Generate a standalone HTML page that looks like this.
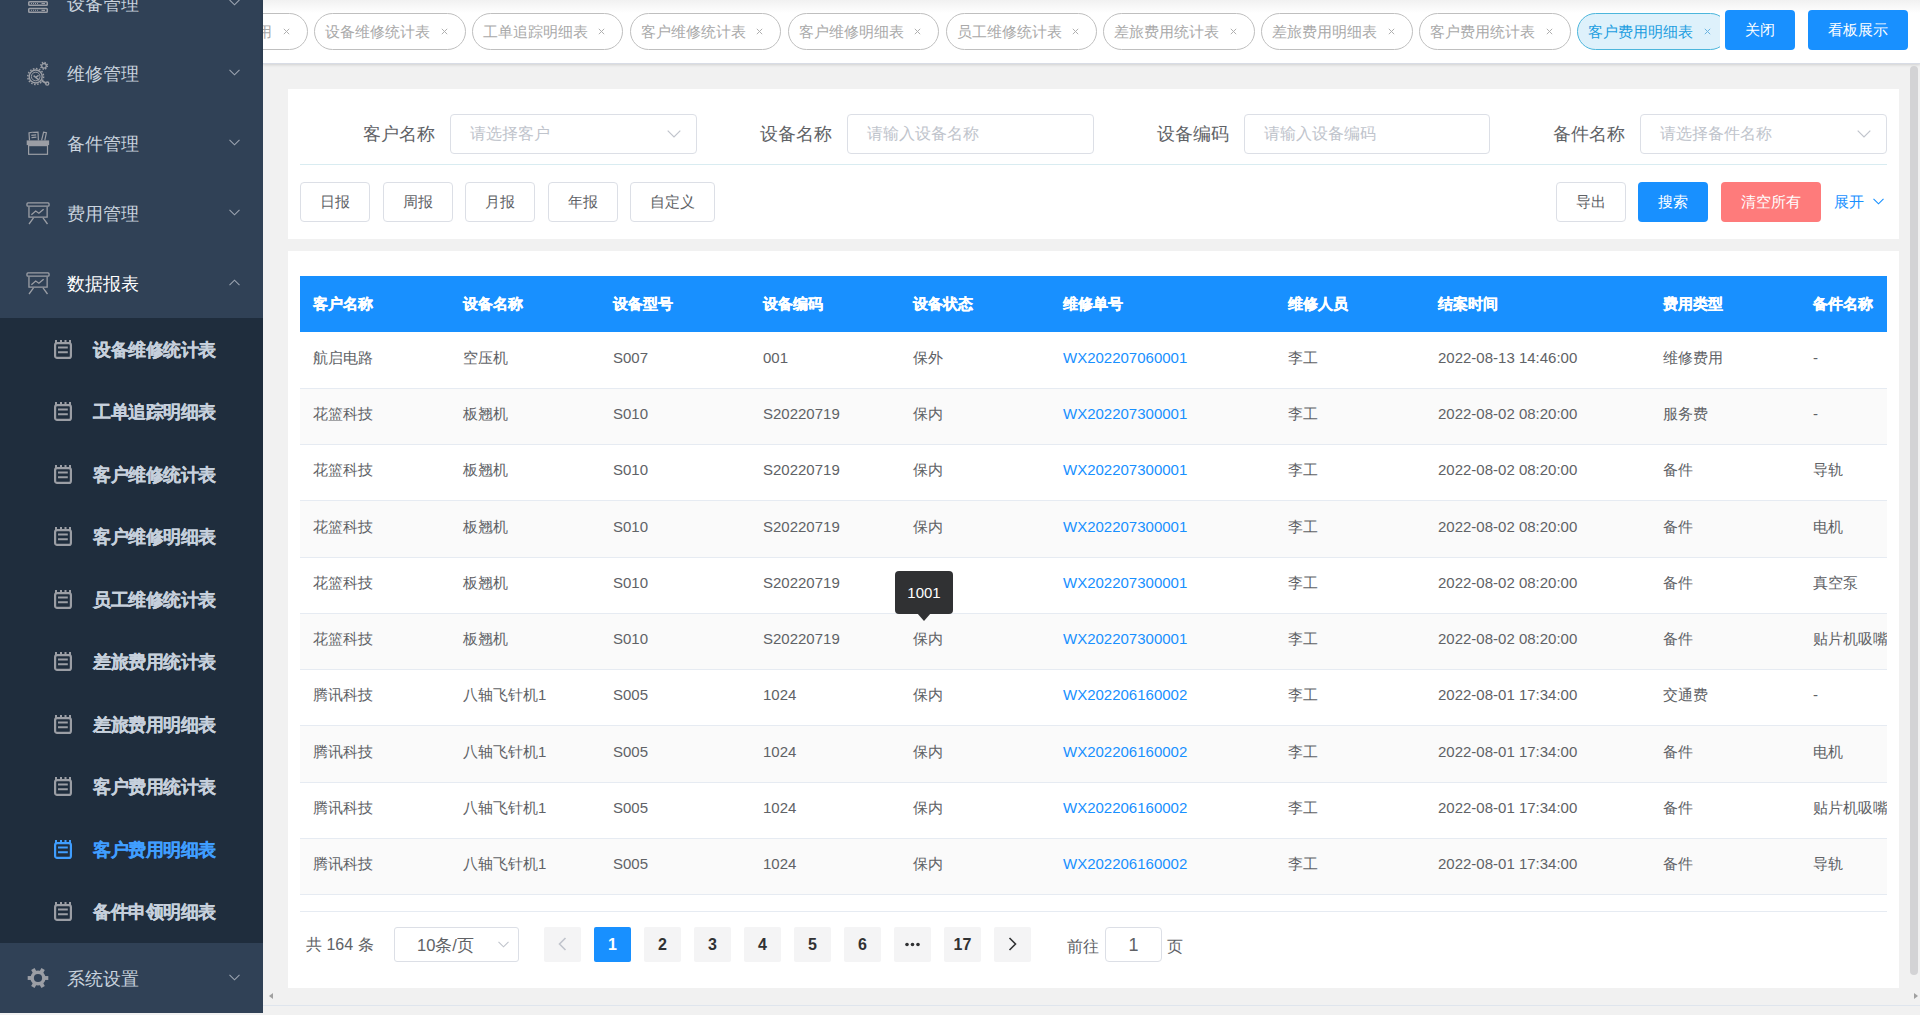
<!DOCTYPE html>
<html><head><meta charset="utf-8">
<style>

*{box-sizing:border-box;margin:0;padding:0}
html,body{width:1920px;height:1015px;overflow:hidden;background:#f1f1f1;font-family:"Liberation Sans",sans-serif;color:#606266}
.abs{position:absolute}
svg{display:block}
#side{position:absolute;left:0;top:0;width:263px;height:1013px;background:#304156;overflow:hidden}
.mi{position:absolute;left:0;width:263px;height:70px;color:#c9d3de;font-size:18px}
.mi .ic{position:absolute;left:26px;top:23px}
.mi .ic-dev{top:24px}
.mi .ic-repair{top:22px}
.mi .ic-parts{top:22px}
.mi .ic-gear{left:26px;top:23px}
.mi .tx{position:absolute;left:67.3px;top:0.5px;line-height:70px;white-space:nowrap}
.mi .ar{position:absolute;left:229px;top:31px;width:11px;height:7px}
.mi.open{color:#fff}
#sub{position:absolute;left:0;top:318px;width:263px;height:625px;background:#1f2d3d}
.si{position:absolute;left:0;width:263px;height:62.5px;color:#c6d0dc;font-size:17.5px;font-weight:bold;letter-spacing:-0.5px;-webkit-text-stroke:0.2px currentColor}
.si .ic{position:absolute;left:53px;top:20.5px;width:20px;height:20px}
.si .tx{position:absolute;left:93px;top:0.5px;line-height:62.5px;white-space:nowrap}
.si.act{color:#409eff}
#tabs{position:absolute;left:263px;top:0;width:1657px;height:64px;background:#fff;border-bottom:1px solid #d8dce5;box-shadow:0 1px 3px 0 rgba(0,0,0,.12),0 0 3px 0 rgba(0,0,0,.04)}
#tabs .topg{position:absolute;left:0;top:0;width:100%;height:13px;background:linear-gradient(#f1f1f1,#fff)}
#tabclip{position:absolute;left:0;top:0;width:1457px;height:63px;overflow:hidden}
.tab{position:absolute;top:13px;height:37px;width:151.5px;border:1px solid #bfbfbf;border-radius:18.5px;font-size:15px;color:#a9a9a9;white-space:nowrap}
.tab .t{position:absolute;left:10px;top:0;line-height:35px}
.tab .x{position:absolute;left:125.5px;top:13.5px;color:#b0b0b0}
.tab.on .x{color:#6cb4e0}
.tab.on{background:#def1fb;border-color:#4cb6dc;color:#1b9de0}
.btn{position:absolute;height:40px;border-radius:4px;font-size:15px;line-height:40px;text-align:center;white-space:nowrap}
.bp{background:#1890ff;color:#fff}
.bd{background:#fff;border:1px solid #dcdfe6;color:#606266;line-height:38px}
.card{position:absolute;left:288px;width:1611px;background:#fff}
.lbl{position:absolute;font-size:17.8px;color:#606266;line-height:40px;top:114px;white-space:nowrap;text-align:right;width:150px}
.inp{position:absolute;top:114px;height:40px;border:1px solid #dcdfe6;border-radius:4px;background:#fff;font-size:16px;color:#c0c4cc;line-height:38px;padding-left:19px;white-space:nowrap}
.inp svg{position:absolute;right:15px;top:15px}
#thead{position:absolute;left:300px;top:276px;width:1587px;height:56px;background:#1890ff;color:#fff;font-size:15px;font-weight:bold;overflow:hidden;-webkit-text-stroke:0.3px #fff}
.row{position:absolute;left:300px;width:1587px;height:56.25px;border-bottom:1px solid #e6ebf2;font-size:15px;color:#606266;overflow:hidden;background:#fff}
.row.st{background:#fafafa}
.c{position:absolute;top:0;white-space:nowrap}
#thead .c{line-height:56px}
.row .c{line-height:24px}
.lnk{color:#1890ff}
.pg{position:absolute;top:927px;height:35px;width:37px;border-radius:2px;background:#f4f4f5;color:#303133;font-size:16px;font-weight:bold;text-align:center;line-height:35px}
.pg.on{background:#1890ff;color:#fff}

</style></head><body>
<div id="side">
<div class="mi" style="top:-32px"><span class="ic ic-dev"><svg width="24" height="24" viewBox="0 0 24 24"><g fill="none" stroke="#9b9ea5" stroke-width="1.5"><rect x="2.75" y="2.5" width="18.5" height="3.8" rx="0.8"/><rect x="2.75" y="9.75" width="18.5" height="3.6" rx="0.8"/><rect x="2.75" y="16.45" width="18.5" height="3.8" rx="0.8"/></g><g stroke="#9b9ea5" stroke-width="1" stroke-dasharray="1 1"><path d="M5 11.5 H12 M5 18.3 H12"/></g><g stroke="#9b9ea5" stroke-width="1.2"><path d="M15.5 11.5 H19 M15.5 18.3 H19"/></g></svg></span><span class="tx">设备管理</span><span class="ar"><svg width="11" height="7" viewBox="0 0 11 7"><path d="M0.5 0.8 L5.5 5.8 L10.5 0.8" fill="none" stroke="#9aa3b0" stroke-width="1.1"/></svg></span></div>
<div class="mi" style="top:38px"><span class="ic ic-repair"><svg width="26" height="26" viewBox="0 0 26 26"><g fill="none" stroke="#9b9ea5"><circle cx="9.7" cy="16.5" r="7.9" stroke-width="1.5" stroke-dasharray="1.6 1.5"/><circle cx="9.7" cy="16.5" r="6.5" stroke-width="1.4"/><circle cx="9.7" cy="16.5" r="4.3" stroke-width="1"/><path d="M7.6 15.6 L9.6 17.4 L12.6 15.4 M9.6 17.4 L13.2 20.2" stroke-width="1.5"/><circle cx="18" cy="5.8" r="3.3" stroke-width="1.6" stroke-dasharray="1.3 1.3"/><circle cx="18" cy="5.8" r="2.3" stroke-width="1.3"/><path d="M15.5 20.5 L20.5 23.5" stroke-width="2"/><circle cx="21.2" cy="23.6" r="1.6" stroke-width="1.3"/></g></svg></span><span class="tx">维修管理</span><span class="ar"><svg width="11" height="7" viewBox="0 0 11 7"><path d="M0.5 0.8 L5.5 5.8 L10.5 0.8" fill="none" stroke="#9aa3b0" stroke-width="1.1"/></svg></span></div>
<div class="mi" style="top:108px"><span class="ic ic-parts"><svg width="26" height="26" viewBox="0 0 26 26"><g fill="none" stroke="#9b9ea5" stroke-width="1.2"><rect x="2.6" y="15.6" width="18.9" height="8.7"/><path d="M3.5 10.4 L3 2.9 Q5.5 1.9 8 2.4 L12 2.1 L12.4 10.4"/><path d="M5.3 5.3 L10.2 4.9 M5.5 7.6 L10.4 7.2"/><path d="M15.6 10.4 L17.6 2.2 L20.4 2.7 L18.8 10.4"/></g><rect x="0.7" y="10.4" width="22.4" height="4.7" fill="#9b9ea5"/></svg></span><span class="tx">备件管理</span><span class="ar"><svg width="11" height="7" viewBox="0 0 11 7"><path d="M0.5 0.8 L5.5 5.8 L10.5 0.8" fill="none" stroke="#9aa3b0" stroke-width="1.1"/></svg></span></div>
<div class="mi" style="top:178px"><span class="ic ic-fee"><svg width="24" height="24" viewBox="0 0 24 24"><g fill="none" stroke="#9b9ea5" stroke-width="1.3"><rect x="0.95" y="1.95" width="22.1" height="3.2" rx="1"/><path d="M2.95 5.8 V16.15 H21.15 V5.8"/><path d="M5.4 13.7 L9.7 10 L12.9 12.2 L17.6 8.2"/><path d="M7.5 16.8 L3 23 M17 16.8 L21.5 23"/></g></svg></span><span class="tx">费用管理</span><span class="ar"><svg width="11" height="7" viewBox="0 0 11 7"><path d="M0.5 0.8 L5.5 5.8 L10.5 0.8" fill="none" stroke="#9aa3b0" stroke-width="1.1"/></svg></span></div>
<div class="mi open" style="top:248px"><span class="ic ic-fee"><svg width="24" height="24" viewBox="0 0 24 24"><g fill="none" stroke="#9b9ea5" stroke-width="1.3"><rect x="0.95" y="1.95" width="22.1" height="3.2" rx="1"/><path d="M2.95 5.8 V16.15 H21.15 V5.8"/><path d="M5.4 13.7 L9.7 10 L12.9 12.2 L17.6 8.2"/><path d="M7.5 16.8 L3 23 M17 16.8 L21.5 23"/></g></svg></span><span class="tx">数据报表</span><span class="ar"><svg width="11" height="7" viewBox="0 0 11 7"><path d="M0.5 6.2 L5.5 1.2 L10.5 6.2" fill="none" stroke="#9aa3b0" stroke-width="1.1"/></svg></span></div>
<div id="sub">
<div class="si" style="top:0.0px"><span class="ic"><svg width="20" height="20" viewBox="0 0 20 20"><g fill="none" stroke="#9b9ea5" stroke-width="2.2"><rect x="2.1" y="4.1" width="15.8" height="14.8" rx="2"/><path d="M5 8.6 H14.8 M5 13.3 H14.8" stroke-width="2"/></g><g fill="#9b9ea5"><rect x="2" y="1" width="2" height="3"/><rect x="7" y="1" width="2" height="3"/><rect x="11.5" y="1" width="2" height="3"/><rect x="16" y="1" width="2" height="3"/></g></svg></span><span class="tx">设备维修统计表</span></div>
<div class="si" style="top:62.5px"><span class="ic"><svg width="20" height="20" viewBox="0 0 20 20"><g fill="none" stroke="#9b9ea5" stroke-width="2.2"><rect x="2.1" y="4.1" width="15.8" height="14.8" rx="2"/><path d="M5 8.6 H14.8 M5 13.3 H14.8" stroke-width="2"/></g><g fill="#9b9ea5"><rect x="2" y="1" width="2" height="3"/><rect x="7" y="1" width="2" height="3"/><rect x="11.5" y="1" width="2" height="3"/><rect x="16" y="1" width="2" height="3"/></g></svg></span><span class="tx">工单追踪明细表</span></div>
<div class="si" style="top:125.0px"><span class="ic"><svg width="20" height="20" viewBox="0 0 20 20"><g fill="none" stroke="#9b9ea5" stroke-width="2.2"><rect x="2.1" y="4.1" width="15.8" height="14.8" rx="2"/><path d="M5 8.6 H14.8 M5 13.3 H14.8" stroke-width="2"/></g><g fill="#9b9ea5"><rect x="2" y="1" width="2" height="3"/><rect x="7" y="1" width="2" height="3"/><rect x="11.5" y="1" width="2" height="3"/><rect x="16" y="1" width="2" height="3"/></g></svg></span><span class="tx">客户维修统计表</span></div>
<div class="si" style="top:187.5px"><span class="ic"><svg width="20" height="20" viewBox="0 0 20 20"><g fill="none" stroke="#9b9ea5" stroke-width="2.2"><rect x="2.1" y="4.1" width="15.8" height="14.8" rx="2"/><path d="M5 8.6 H14.8 M5 13.3 H14.8" stroke-width="2"/></g><g fill="#9b9ea5"><rect x="2" y="1" width="2" height="3"/><rect x="7" y="1" width="2" height="3"/><rect x="11.5" y="1" width="2" height="3"/><rect x="16" y="1" width="2" height="3"/></g></svg></span><span class="tx">客户维修明细表</span></div>
<div class="si" style="top:250.0px"><span class="ic"><svg width="20" height="20" viewBox="0 0 20 20"><g fill="none" stroke="#9b9ea5" stroke-width="2.2"><rect x="2.1" y="4.1" width="15.8" height="14.8" rx="2"/><path d="M5 8.6 H14.8 M5 13.3 H14.8" stroke-width="2"/></g><g fill="#9b9ea5"><rect x="2" y="1" width="2" height="3"/><rect x="7" y="1" width="2" height="3"/><rect x="11.5" y="1" width="2" height="3"/><rect x="16" y="1" width="2" height="3"/></g></svg></span><span class="tx">员工维修统计表</span></div>
<div class="si" style="top:312.5px"><span class="ic"><svg width="20" height="20" viewBox="0 0 20 20"><g fill="none" stroke="#9b9ea5" stroke-width="2.2"><rect x="2.1" y="4.1" width="15.8" height="14.8" rx="2"/><path d="M5 8.6 H14.8 M5 13.3 H14.8" stroke-width="2"/></g><g fill="#9b9ea5"><rect x="2" y="1" width="2" height="3"/><rect x="7" y="1" width="2" height="3"/><rect x="11.5" y="1" width="2" height="3"/><rect x="16" y="1" width="2" height="3"/></g></svg></span><span class="tx">差旅费用统计表</span></div>
<div class="si" style="top:375.0px"><span class="ic"><svg width="20" height="20" viewBox="0 0 20 20"><g fill="none" stroke="#9b9ea5" stroke-width="2.2"><rect x="2.1" y="4.1" width="15.8" height="14.8" rx="2"/><path d="M5 8.6 H14.8 M5 13.3 H14.8" stroke-width="2"/></g><g fill="#9b9ea5"><rect x="2" y="1" width="2" height="3"/><rect x="7" y="1" width="2" height="3"/><rect x="11.5" y="1" width="2" height="3"/><rect x="16" y="1" width="2" height="3"/></g></svg></span><span class="tx">差旅费用明细表</span></div>
<div class="si" style="top:437.5px"><span class="ic"><svg width="20" height="20" viewBox="0 0 20 20"><g fill="none" stroke="#9b9ea5" stroke-width="2.2"><rect x="2.1" y="4.1" width="15.8" height="14.8" rx="2"/><path d="M5 8.6 H14.8 M5 13.3 H14.8" stroke-width="2"/></g><g fill="#9b9ea5"><rect x="2" y="1" width="2" height="3"/><rect x="7" y="1" width="2" height="3"/><rect x="11.5" y="1" width="2" height="3"/><rect x="16" y="1" width="2" height="3"/></g></svg></span><span class="tx">客户费用统计表</span></div>
<div class="si act" style="top:500.0px"><span class="ic"><svg width="20" height="20" viewBox="0 0 20 20"><g fill="none" stroke="#409eff" stroke-width="2.2"><rect x="2.1" y="4.1" width="15.8" height="14.8" rx="2"/><path d="M5 8.6 H14.8 M5 13.3 H14.8" stroke-width="2"/></g><g fill="#409eff"><rect x="2" y="1" width="2" height="3"/><rect x="7" y="1" width="2" height="3"/><rect x="11.5" y="1" width="2" height="3"/><rect x="16" y="1" width="2" height="3"/></g></svg></span><span class="tx">客户费用明细表</span></div>
<div class="si" style="top:562.5px"><span class="ic"><svg width="20" height="20" viewBox="0 0 20 20"><g fill="none" stroke="#9b9ea5" stroke-width="2.2"><rect x="2.1" y="4.1" width="15.8" height="14.8" rx="2"/><path d="M5 8.6 H14.8 M5 13.3 H14.8" stroke-width="2"/></g><g fill="#9b9ea5"><rect x="2" y="1" width="2" height="3"/><rect x="7" y="1" width="2" height="3"/><rect x="11.5" y="1" width="2" height="3"/><rect x="16" y="1" width="2" height="3"/></g></svg></span><span class="tx">备件申领明细表</span></div>
</div>
<div class="mi" style="top:943px"><span class="ic ic-gear"><svg width="24" height="24" viewBox="0 0 24 24"><line x1="12" y1="12" x2="22.30" y2="12.00" stroke="#9b9ea5" stroke-width="3.9"/><line x1="12" y1="12" x2="17.15" y2="20.92" stroke="#9b9ea5" stroke-width="3.9"/><line x1="12" y1="12" x2="6.85" y2="20.92" stroke="#9b9ea5" stroke-width="3.9"/><line x1="12" y1="12" x2="1.70" y2="12.00" stroke="#9b9ea5" stroke-width="3.9"/><line x1="12" y1="12" x2="6.85" y2="3.08" stroke="#9b9ea5" stroke-width="3.9"/><line x1="12" y1="12" x2="17.15" y2="3.08" stroke="#9b9ea5" stroke-width="3.9"/><circle cx="12" cy="12" r="7.6" fill="#9b9ea5"/><circle cx="12" cy="12" r="4.1" fill="#304156"/></svg></span><span class="tx">系统设置</span><span class="ar"><svg width="11" height="7" viewBox="0 0 11 7"><path d="M0.5 0.8 L5.5 5.8 L10.5 0.8" fill="none" stroke="#9aa3b0" stroke-width="1.1"/></svg></span></div>
</div>
<div id="tabs"><div class="topg"></div><div id="tabclip">
<div class="tab" style="left:-106.875px"><span class="t">设备维修总费用</span><span class="x"><svg width="7" height="7" viewBox="0 0 7 7"><path d="M0.8 0.8 L6.2 6.2 M6.2 0.8 L0.8 6.2" stroke="currentColor" stroke-width="1"/></svg></span></div>
<div class="tab" style="left:51.0px"><span class="t">设备维修统计表</span><span class="x"><svg width="7" height="7" viewBox="0 0 7 7"><path d="M0.8 0.8 L6.2 6.2 M6.2 0.8 L0.8 6.2" stroke="currentColor" stroke-width="1"/></svg></span></div>
<div class="tab" style="left:208.875px"><span class="t">工单追踪明细表</span><span class="x"><svg width="7" height="7" viewBox="0 0 7 7"><path d="M0.8 0.8 L6.2 6.2 M6.2 0.8 L0.8 6.2" stroke="currentColor" stroke-width="1"/></svg></span></div>
<div class="tab" style="left:366.75px"><span class="t">客户维修统计表</span><span class="x"><svg width="7" height="7" viewBox="0 0 7 7"><path d="M0.8 0.8 L6.2 6.2 M6.2 0.8 L0.8 6.2" stroke="currentColor" stroke-width="1"/></svg></span></div>
<div class="tab" style="left:524.625px"><span class="t">客户维修明细表</span><span class="x"><svg width="7" height="7" viewBox="0 0 7 7"><path d="M0.8 0.8 L6.2 6.2 M6.2 0.8 L0.8 6.2" stroke="currentColor" stroke-width="1"/></svg></span></div>
<div class="tab" style="left:682.5px"><span class="t">员工维修统计表</span><span class="x"><svg width="7" height="7" viewBox="0 0 7 7"><path d="M0.8 0.8 L6.2 6.2 M6.2 0.8 L0.8 6.2" stroke="currentColor" stroke-width="1"/></svg></span></div>
<div class="tab" style="left:840.375px"><span class="t">差旅费用统计表</span><span class="x"><svg width="7" height="7" viewBox="0 0 7 7"><path d="M0.8 0.8 L6.2 6.2 M6.2 0.8 L0.8 6.2" stroke="currentColor" stroke-width="1"/></svg></span></div>
<div class="tab" style="left:998.25px"><span class="t">差旅费用明细表</span><span class="x"><svg width="7" height="7" viewBox="0 0 7 7"><path d="M0.8 0.8 L6.2 6.2 M6.2 0.8 L0.8 6.2" stroke="currentColor" stroke-width="1"/></svg></span></div>
<div class="tab" style="left:1156.125px"><span class="t">客户费用统计表</span><span class="x"><svg width="7" height="7" viewBox="0 0 7 7"><path d="M0.8 0.8 L6.2 6.2 M6.2 0.8 L0.8 6.2" stroke="currentColor" stroke-width="1"/></svg></span></div>
<div class="tab on" style="left:1314.0px"><span class="t">客户费用明细表</span><span class="x"><svg width="7" height="7" viewBox="0 0 7 7"><path d="M0.8 0.8 L6.2 6.2 M6.2 0.8 L0.8 6.2" stroke="currentColor" stroke-width="1"/></svg></span></div>
</div>
<div class="btn bp" style="left:1462px;top:10px;width:70px">关闭</div>
<div class="btn bp" style="left:1545px;top:10px;width:100px">看板展示</div>
</div>
<div class="card" style="top:89px;height:150px"></div>
<div class="lbl" style="left:285.0px">客户名称</div>
<div class="inp" style="left:450.0px;width:246.75px">请选择客户<svg width="14" height="8" viewBox="0 0 14 8"><path d="M0.7 0.7 L7 7 L13.3 0.7" fill="none" stroke="#c0c4cc" stroke-width="1.2"/></svg></div>
<div class="lbl" style="left:681.75px">设备名称</div>
<div class="inp" style="left:846.75px;width:246.75px">请输入设备名称</div>
<div class="lbl" style="left:1078.5px">设备编码</div>
<div class="inp" style="left:1243.5px;width:246.75px">请输入设备编码</div>
<div class="lbl" style="left:1475.25px">备件名称</div>
<div class="inp" style="left:1640.25px;width:246.75px">请选择备件名称<svg width="14" height="8" viewBox="0 0 14 8"><path d="M0.7 0.7 L7 7 L13.3 0.7" fill="none" stroke="#c0c4cc" stroke-width="1.2"/></svg></div>
<div class="abs" style="left:300px;top:164px;width:1587px;height:1px;background:#d9ecf1"></div>
<div class="btn bd" style="left:300px;top:182px;width:70px">日报</div>
<div class="btn bd" style="left:383px;top:182px;width:70px">周报</div>
<div class="btn bd" style="left:465px;top:182px;width:70px">月报</div>
<div class="btn bd" style="left:548px;top:182px;width:70px">年报</div>
<div class="btn bd" style="left:630px;top:182px;width:85px">自定义</div>
<div class="btn bd" style="left:1556px;top:182px;width:70px">导出</div>
<div class="btn bp" style="left:1638px;top:182px;width:70px">搜索</div>
<div class="btn" style="left:1721px;top:182px;width:100px;background:#fe7b7b;color:#fff">清空所有</div>
<div class="abs" style="left:1834px;top:182px;line-height:40px;font-size:15px;color:#1890ff;white-space:nowrap">展开</div>
<div class="abs" style="left:1873px;top:198px"><svg width="11" height="7" viewBox="0 0 11 7"><path d="M0.5 0.8 L5.5 5.8 L10.5 0.8" fill="none" stroke="#1890ff" stroke-width="1.1"/></svg></div>
<div class="card" style="top:251px;height:737px"></div>
<div id="thead"><span class="c" style="left:13px">客户名称</span><span class="c" style="left:163px">设备名称</span><span class="c" style="left:313px">设备型号</span><span class="c" style="left:463px">设备编码</span><span class="c" style="left:613px">设备状态</span><span class="c" style="left:763px">维修单号</span><span class="c" style="left:988px">维修人员</span><span class="c" style="left:1138px">结案时间</span><span class="c" style="left:1363px">费用类型</span><span class="c" style="left:1513px">备件名称</span></div>
<div class="row" style="top:332px;height:57px"><span class="c" style="left:13px;top:14.30px">航启电路</span><span class="c" style="left:163px;top:14.30px">空压机</span><span class="c" style="left:313px;top:14.30px">S007</span><span class="c" style="left:463px;top:14.30px">001</span><span class="c" style="left:613px;top:14.30px">保外</span><span class="c lnk" style="left:763px;top:14.30px">WX202207060001</span><span class="c" style="left:988px;top:14.30px">李工</span><span class="c" style="left:1138px;top:14.30px">2022-08-13 14:46:00</span><span class="c" style="left:1363px;top:14.30px">维修费用</span><span class="c" style="left:1513px;top:14.30px">-</span></div>
<div class="row st" style="top:389px;height:56px"><span class="c" style="left:13px;top:13.30px">花篮科技</span><span class="c" style="left:163px;top:13.30px">板翘机</span><span class="c" style="left:313px;top:13.30px">S010</span><span class="c" style="left:463px;top:13.30px">S20220719</span><span class="c" style="left:613px;top:13.30px">保内</span><span class="c lnk" style="left:763px;top:13.30px">WX202207300001</span><span class="c" style="left:988px;top:13.30px">李工</span><span class="c" style="left:1138px;top:13.30px">2022-08-02 08:20:00</span><span class="c" style="left:1363px;top:13.30px">服务费</span><span class="c" style="left:1513px;top:13.30px">-</span></div>
<div class="row" style="top:445px;height:56px"><span class="c" style="left:13px;top:13.30px">花篮科技</span><span class="c" style="left:163px;top:13.30px">板翘机</span><span class="c" style="left:313px;top:13.30px">S010</span><span class="c" style="left:463px;top:13.30px">S20220719</span><span class="c" style="left:613px;top:13.30px">保内</span><span class="c lnk" style="left:763px;top:13.30px">WX202207300001</span><span class="c" style="left:988px;top:13.30px">李工</span><span class="c" style="left:1138px;top:13.30px">2022-08-02 08:20:00</span><span class="c" style="left:1363px;top:13.30px">备件</span><span class="c" style="left:1513px;top:13.30px">导轨</span></div>
<div class="row st" style="top:501px;height:57px"><span class="c" style="left:13px;top:14.30px">花篮科技</span><span class="c" style="left:163px;top:14.30px">板翘机</span><span class="c" style="left:313px;top:14.30px">S010</span><span class="c" style="left:463px;top:14.30px">S20220719</span><span class="c" style="left:613px;top:14.30px">保内</span><span class="c lnk" style="left:763px;top:14.30px">WX202207300001</span><span class="c" style="left:988px;top:14.30px">李工</span><span class="c" style="left:1138px;top:14.30px">2022-08-02 08:20:00</span><span class="c" style="left:1363px;top:14.30px">备件</span><span class="c" style="left:1513px;top:14.30px">电机</span></div>
<div class="row" style="top:558px;height:56px"><span class="c" style="left:13px;top:13.30px">花篮科技</span><span class="c" style="left:163px;top:13.30px">板翘机</span><span class="c" style="left:313px;top:13.30px">S010</span><span class="c" style="left:463px;top:13.30px">S20220719</span><span class="c" style="left:613px;top:13.30px">保内</span><span class="c lnk" style="left:763px;top:13.30px">WX202207300001</span><span class="c" style="left:988px;top:13.30px">李工</span><span class="c" style="left:1138px;top:13.30px">2022-08-02 08:20:00</span><span class="c" style="left:1363px;top:13.30px">备件</span><span class="c" style="left:1513px;top:13.30px">真空泵</span></div>
<div class="row st" style="top:614px;height:56px"><span class="c" style="left:13px;top:13.30px">花篮科技</span><span class="c" style="left:163px;top:13.30px">板翘机</span><span class="c" style="left:313px;top:13.30px">S010</span><span class="c" style="left:463px;top:13.30px">S20220719</span><span class="c" style="left:613px;top:13.30px">保内</span><span class="c lnk" style="left:763px;top:13.30px">WX202207300001</span><span class="c" style="left:988px;top:13.30px">李工</span><span class="c" style="left:1138px;top:13.30px">2022-08-02 08:20:00</span><span class="c" style="left:1363px;top:13.30px">备件</span><span class="c" style="left:1513px;top:13.30px">贴片机吸嘴</span></div>
<div class="row" style="top:670px;height:56px"><span class="c" style="left:13px;top:13.30px">腾讯科技</span><span class="c" style="left:163px;top:13.30px">八轴飞针机1</span><span class="c" style="left:313px;top:13.30px">S005</span><span class="c" style="left:463px;top:13.30px">1024</span><span class="c" style="left:613px;top:13.30px">保内</span><span class="c lnk" style="left:763px;top:13.30px">WX202206160002</span><span class="c" style="left:988px;top:13.30px">李工</span><span class="c" style="left:1138px;top:13.30px">2022-08-01 17:34:00</span><span class="c" style="left:1363px;top:13.30px">交通费</span><span class="c" style="left:1513px;top:13.30px">-</span></div>
<div class="row st" style="top:726px;height:57px"><span class="c" style="left:13px;top:14.30px">腾讯科技</span><span class="c" style="left:163px;top:14.30px">八轴飞针机1</span><span class="c" style="left:313px;top:14.30px">S005</span><span class="c" style="left:463px;top:14.30px">1024</span><span class="c" style="left:613px;top:14.30px">保内</span><span class="c lnk" style="left:763px;top:14.30px">WX202206160002</span><span class="c" style="left:988px;top:14.30px">李工</span><span class="c" style="left:1138px;top:14.30px">2022-08-01 17:34:00</span><span class="c" style="left:1363px;top:14.30px">备件</span><span class="c" style="left:1513px;top:14.30px">电机</span></div>
<div class="row" style="top:783px;height:56px"><span class="c" style="left:13px;top:13.30px">腾讯科技</span><span class="c" style="left:163px;top:13.30px">八轴飞针机1</span><span class="c" style="left:313px;top:13.30px">S005</span><span class="c" style="left:463px;top:13.30px">1024</span><span class="c" style="left:613px;top:13.30px">保内</span><span class="c lnk" style="left:763px;top:13.30px">WX202206160002</span><span class="c" style="left:988px;top:13.30px">李工</span><span class="c" style="left:1138px;top:13.30px">2022-08-01 17:34:00</span><span class="c" style="left:1363px;top:13.30px">备件</span><span class="c" style="left:1513px;top:13.30px">贴片机吸嘴</span></div>
<div class="row st" style="top:839px;height:56px"><span class="c" style="left:13px;top:13.30px">腾讯科技</span><span class="c" style="left:163px;top:13.30px">八轴飞针机1</span><span class="c" style="left:313px;top:13.30px">S005</span><span class="c" style="left:463px;top:13.30px">1024</span><span class="c" style="left:613px;top:13.30px">保内</span><span class="c lnk" style="left:763px;top:13.30px">WX202206160002</span><span class="c" style="left:988px;top:13.30px">李工</span><span class="c" style="left:1138px;top:13.30px">2022-08-01 17:34:00</span><span class="c" style="left:1363px;top:13.30px">备件</span><span class="c" style="left:1513px;top:13.30px">导轨</span></div>
<div class="abs" style="left:300px;top:911px;width:1587px;height:1px;background:#e6ebf2"></div>
<div class="abs" style="left:895px;top:571px;width:58px;height:43px;background:#303133;border-radius:4px;color:#fff;font-size:15px;line-height:43px;text-align:center">1001</div>
<div class="abs" style="left:917px;top:613px;width:0;height:0;border-left:7.5px solid transparent;border-right:7.5px solid transparent;border-top:8px solid #303133"></div>
<div class="abs" style="left:306px;top:928px;line-height:34px;font-size:16px;color:#606266;white-space:nowrap">共 164 条</div>
<div class="abs inpg" style="left:394px;top:927px;width:125px;height:35px;border:1px solid #dcdfe6;border-radius:3px;font-size:16.5px;color:#606266;line-height:35px;padding-left:22px">10条/页<svg style="position:absolute;left:103px;top:13px" width="11" height="7" viewBox="0 0 11 7"><path d="M0.5 0.8 L5.5 5.8 L10.5 0.8" fill="none" stroke="#c0c4cc" stroke-width="1.1"/></svg></div>
<div class="pg" style="left:544px"><svg width="9" height="14" viewBox="0 0 9 14" style="margin:10px auto 0"><path d="M7.5 1 L1.5 7 L7.5 13" fill="none" stroke="#c0c4cc" stroke-width="1.6"/></svg></div>
<div class="pg on" style="left:594px">1</div>
<div class="pg" style="left:644px">2</div>
<div class="pg" style="left:694px">3</div>
<div class="pg" style="left:744px">4</div>
<div class="pg" style="left:794px">5</div>
<div class="pg" style="left:844px">6</div>
<div class="pg" style="left:894px"><svg width="15" height="5" viewBox="0 0 15 5" style="margin:15px auto 0"><circle cx="2" cy="2.5" r="1.8" fill="#303133"/><circle cx="7.5" cy="2.5" r="1.8" fill="#303133"/><circle cx="13" cy="2.5" r="1.8" fill="#303133"/></svg></div>
<div class="pg" style="left:944px">17</div>
<div class="pg" style="left:994px"><svg width="9" height="14" viewBox="0 0 9 14" style="margin:10px auto 0"><path d="M1.5 1 L7.5 7 L1.5 13" fill="none" stroke="#303133" stroke-width="1.6"/></svg></div>
<div class="abs" style="left:1067px;top:929.5px;line-height:34px;font-size:16px;color:#606266">前往</div>
<div class="abs" style="left:1105px;top:927px;width:57px;height:35px;border:1px solid #dcdfe6;border-radius:4px;font-size:18px;color:#606266;line-height:35px;text-align:center">1</div>
<div class="abs" style="left:1167px;top:929.5px;line-height:34px;font-size:16px;color:#606266">页</div>
<div class="abs" style="left:1910px;top:66px;width:8px;height:909px;background:#d3d3d5;border-radius:4px"></div>
<div class="abs" style="left:269px;top:993px;width:0;height:0;border-top:3.5px solid transparent;border-bottom:3.5px solid transparent;border-right:4.5px solid #a0a0a0"></div>
<div class="abs" style="left:1913.6px;top:992.9px;width:0;height:0;border-top:3.7px solid transparent;border-bottom:3.7px solid transparent;border-left:4.8px solid #a0a0a0"></div>
<div class="abs" style="left:263px;top:1005px;width:1657px;height:1px;background:#dfe5ed"></div>
</body></html>
